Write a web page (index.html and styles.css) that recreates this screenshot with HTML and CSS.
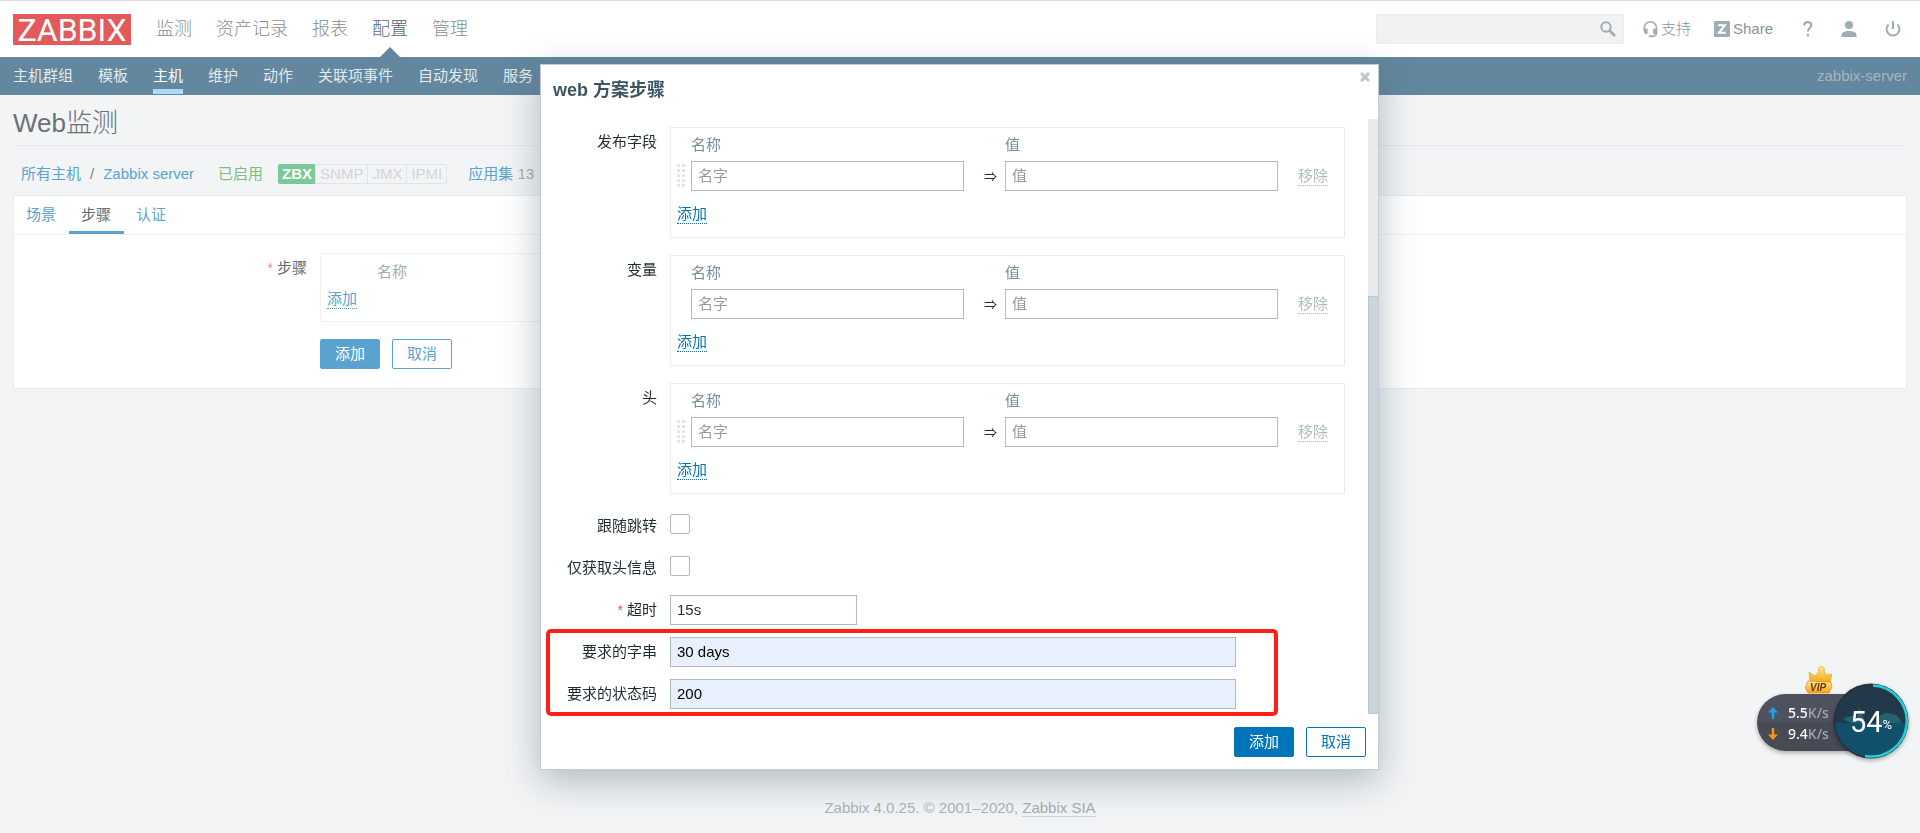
FILE: index.html
```html
<!DOCTYPE html>
<html lang="zh-CN">
<head>
<meta charset="utf-8">
<title>Web监测</title>
<link rel="stylesheet" href="styles.css">
</head>
<body>
<div class="page">
<header class="top">
  <a class="logo" href="#">ZABBIX</a>
  <nav class="main-nav">
    <a href="#">监测</a><a href="#">资产记录</a><a href="#">报表</a><a class="active" href="#">配置</a><a href="#">管理</a>
  </nav>
  <form class="search">
    <input type="text" aria-label="搜索">
    <button type="button" aria-label="搜索"><svg width="16" height="16" viewBox="0 0 16 16"><circle cx="6" cy="6" r="4.7" fill="none" stroke="#9fadb5" stroke-width="2"/><path d="M9.5 9.5L15 15" stroke="#9fadb5" stroke-width="2.6"/></svg></button>
  </form>
  <div class="tools">
    <a class="tool" href="#"><svg width="15" height="17" viewBox="0 0 15 17"><path d="M1.2 10V7a6.2 6.2 0 0 1 12.4 0v5q0 3.2-4.6 3.4" fill="none" stroke="#9fadb5" stroke-width="1.6"/><path d="M1 7.5h3.600v5.500H3Q1 13 1 11zM10.200 7.500h3.600V11q0 2-2 2h-1.600zM6 14.300h3v2H6z" fill="#9fadb5"/></svg>支持</a>
    <a class="tool share" href="#"><svg width="16" height="16" viewBox="0 0 16 16"><rect width="16" height="16" rx="1" fill="#9fadb5"/><path d="M4.200 4.200h6.600L5 11.800h6.800" fill="none" stroke="#fff" stroke-width="2"/></svg>Share</a>
    <a class="icon-link" href="#" aria-label="帮助"><svg width="10" height="16" viewBox="0 0 10 16"><path d="M1.200 4.500C1.200 2 2.700 1.100 4.700 1.100s3.600 1 3.600 3c0 2.700-3.400 3.100-3.400 6.500" fill="none" stroke="#9fadb5" stroke-width="2.200"/><rect x="3.700" y="13" width="2.500" height="2.500" rx="1" fill="#9fadb5"/></svg></a>
    <a class="icon-link" href="#" aria-label="用户"><svg width="16" height="16" viewBox="0 0 16 16"><circle cx="8" cy="4" r="4" fill="#9fadb5"/><path d="M0.500 16v-2C.5 11 4 10 8 10s7.500 1 7.500 4v2z" fill="#9fadb5"/></svg></a>
    <a class="icon-link" href="#" aria-label="退出"><svg width="16" height="16" viewBox="0 0 16 16"><path d="M3.600 3.500a6.400 6.400 0 1 0 8.800 0M8 0v8" fill="none" stroke="#9fadb5" stroke-width="2"/></svg></a>
  </div>
</header>
<nav class="sub-nav">
  <a href="#">主机群组</a><a href="#">模板</a><a class="active" href="#">主机</a><a href="#">维护</a><a href="#">动作</a><a href="#">关联项事件</a><a href="#">自动发现</a><a href="#">服务</a>
  <span class="server">zabbix-server</span>
</nav>
<main class="content">
  <h1>Web监测</h1>
  <div class="crumbs">
    <a href="#">所有主机</a><span class="slash">/</span><a href="#">Zabbix server</a>
    <span class="enabled">已启用</span>
    <span class="status"><span class="on">ZBX</span><span>SNMP</span><span>JMX</span><span>IPMI</span></span>
    <span class="apps"><a href="#">应用集</a> 13</span>
  </div>
  <section class="panel">
    <div class="tabs"><a href="#">场景</a><a class="active" href="#">步骤</a><a href="#">认证</a></div>
    <div class="panel-body">
      <div class="panel-label"><span class="star">*</span> 步骤</div>
      <div>
        <div class="steps"><div class="steps-head">名称</div><button type="button" class="link">添加</button></div>
        <div class="panel-actions"><button type="button" class="btn primary">添加</button><button type="button" class="btn">取消</button></div>
      </div>
    </div>
  </section>
</main>
<footer class="footer">Zabbix 4.0.25. © 2001–2020, <a href="#">Zabbix SIA</a></footer>
</div>

<div class="overlay">
<div class="dialog" role="dialog" aria-labelledby="dlg-title">
  <div class="dialog-head">
    <h2 id="dlg-title">web 方案步骤</h2>
    <button type="button" class="close" aria-label="关闭"><svg width="10" height="10" viewBox="0 0 10 10"><path d="M1 1l8 8M9 1L1 9" stroke="#b9c5cc" stroke-width="3"/></svg></button>
  </div>
  <div class="dialog-body">
    <form class="form">
      <div class="row pairs-row">
        <div class="label">发布字段</div>
        <div class="pairs">
          <label class="c-name" for="p1n">名称</label><label class="c-value" for="p1v">值</label>
          <span class="drag"></span><input id="p1n" type="text" placeholder="名字"><span class="arrow">⇒</span><input id="p1v" type="text" placeholder="值"><button type="button" class="link off">移除</button>
          <button type="button" class="link add">添加</button>
        </div>
      </div>
      <div class="row pairs-row">
        <div class="label">变量</div>
        <div class="pairs">
          <label class="c-name" for="p2n">名称</label><label class="c-value" for="p2v">值</label>
          <span></span><input id="p2n" type="text" placeholder="名字"><span class="arrow">⇒</span><input id="p2v" type="text" placeholder="值"><button type="button" class="link off">移除</button>
          <button type="button" class="link add">添加</button>
        </div>
      </div>
      <div class="row pairs-row">
        <div class="label">头</div>
        <div class="pairs">
          <label class="c-name" for="p3n">名称</label><label class="c-value" for="p3v">值</label>
          <span class="drag"></span><input id="p3n" type="text" placeholder="名字"><span class="arrow">⇒</span><input id="p3v" type="text" placeholder="值"><button type="button" class="link off">移除</button>
          <button type="button" class="link add">添加</button>
        </div>
      </div>
      <div class="row"><label class="label" for="follow">跟随跳转</label><input id="follow" type="checkbox"></div>
      <div class="row"><label class="label" for="heads">仅获取头信息</label><input id="heads" type="checkbox"></div>
      <div class="row"><label class="label" for="timeout"><span class="star">*</span> 超时</label><input id="timeout" class="short" type="text" value="15s"></div>
      <div class="marked">
        <div class="row"><label class="label" for="reqstr">要求的字串</label><input id="reqstr" class="long" type="text" value="30 days"></div>
        <div class="row"><label class="label" for="codes">要求的状态码</label><input id="codes" class="long" type="text" value="200"></div>
      </div>
    </form>
    <div class="track"><div class="thumb"></div></div>
  </div>
  <div class="dialog-foot"><button type="button" class="btn primary">添加</button><button type="button" class="btn">取消</button></div>
</div>
</div>

<aside class="meter">
  <div class="speeds">
    <div class="speed"><svg width="10" height="12" viewBox="0 0 10 12"><path d="M5 0l5 5.500H6.200V12H3.800V5.500H0z" fill="#1ba4f2"/></svg><span>5.5<i>K/s</i></span></div>
    <div class="speed"><svg width="10" height="12" viewBox="0 0 10 12"><path d="M5 12l5-5.500H6.200V0H3.800v6.500H0z" fill="#ff9313"/></svg><span>9.4<i>K/s</i></span></div>
  </div>
  <div class="dial">
    <svg width="76" height="76" viewBox="0 0 76 76">
      <defs><clipPath id="disc"><circle cx="38" cy="38" r="36"/></clipPath></defs>
      <circle cx="38" cy="38" r="37.500" fill="#2b2f3b"/>
      <g clip-path="url(#disc)"><rect width="76" height="76" fill="#22384b"/><path d="M10 36q7-5 14-2l2-10 4 9 2 7H18zM44 40q1-9 9-10 14 0 15 10z" fill="#25616f"/><rect y="40" width="76" height="36" fill="#124f6b"/></g>
      <path d="M40 2.600A35.500 35.500 0 1 1 32 73" fill="none" stroke="#25cfd8" stroke-width="2.500"/>
    </svg>
    <div class="percent"><span>54</span><small>%</small></div>
  </div>
  <svg class="crown" width="28" height="28" viewBox="0 0 28 28">
    <defs><linearGradient id="gold" x1="0" y1="0" x2="0" y2="1"><stop offset="0" stop-color="#ffe98a"/><stop offset="1" stop-color="#f2a516"/></linearGradient></defs>
    <path d="M5 16L4 6l6 4 4-5a3 3 0 1 1 5 0l2 4 6-1-2 9z" fill="url(#gold)" stroke="#e2a02c" stroke-width=".6"/>
    <path d="M3 15l23 1 1 5-3 6H3l-3-5z" fill="url(#gold)" stroke="#e28a26" stroke-width=".7"/>
    <text x="5" y="25" class="vip">VIP</text>
  </svg>
</aside>
</body>
</html>
```
FILE: styles.css
```css
*, *::before, *::after { box-sizing: border-box; }
body {
  margin: 0;
  background: #f2f4f5;
  color: #1f2c33;
  font: 15px/20px "Liberation Sans", "Noto Sans CJK SC", sans-serif;
}
h1, h2 { margin: 0; }
a { text-decoration: none; }
button, input { font: inherit; margin: 0; }
svg { display: block; flex: none; }
.page { min-height: 100vh; display: flex; flex-direction: column; }

.top {
  display: flex;
  align-items: center;
  height: 57px;
  padding: 0 19px 0 13px;
  background: #fff;
  border-top: 1px solid #d9dade;
}
.logo {
  width: 118px;
  height: 31px;
  background: #e45959;
  color: #fff;
  font: 32px/32px Roboto, sans-serif;
  text-align: center;
}
.main-nav { display: flex; align-self: stretch; margin-left: 13px; font-size: 18px; font-weight: 300; }
.main-nav a { position: relative; padding: 0 12px; line-height: 56px; color: #8a8f92; }
.main-nav .active { color: #5d666c; }
.main-nav .active::after {
  content: "";
  position: absolute;
  bottom: 0;
  left: calc(50% - 10px);
  border: 10px solid transparent;
  border-top: 0;
  border-bottom-color: #62879e;
}
.search {
  display: flex;
  align-items: center;
  width: 248px;
  height: 30px;
  margin-left: auto;
  padding-right: 7px;
  background: #f2f2f2;
  border: 1px solid #ebeded;
}
.search input { flex: 1; min-width: 0; border: 0; background: none; }
.search button { padding: 0; border: 0; background: none; }
.tools { display: flex; align-items: center; margin-left: 19px; }
.tool { display: flex; align-items: center; gap: 3px; color: #8a9297; font-weight: 300; }
.share { margin-left: 23px; }
.icon-link { margin-left: 28px; }
.share + .icon-link { margin-left: 30px; }

.sub-nav {
  display: flex;
  gap: 25px;
  height: 38px;
  padding: 0 13px;
  background: #62879e;
}
.sub-nav a { padding-top: 9px; color: #e2eaee; height: 37px; }
.sub-nav .active { color: #fff; border-bottom: 5px solid #a9daf8; }
.server { margin-left: auto; padding-top: 9px; color: #a5b5c0; }

.content { padding: 0 13px; }
h1 {
  height: 51px;
  border-bottom: 1px solid #e6e9eb;
  color: #6a7175;
  font-size: 26px;
  line-height: 56px;
  font-weight: 300;
}
.crumbs { display: flex; align-items: center; height: 49px; padding: 6px 8px 0; color: #a0adb4; }
.crumbs a, .tabs a { color: #5aa3d1; }
.slash { padding: 0 9px; color: #7a8287; }
.enabled { margin-left: 24px; color: #7fbd7f; }
.status { display: flex; margin: 0 21px 0 15px; border: 1px solid #dfe4e7; border-radius: 2px; line-height: 18px; color: #d0d7da; }
.status span { padding: 0 4px; border-left: 1px solid #dfe4e7; }
.status .on { margin: -1px 0 -1px -1px; padding: 1px 3px 1px 4px; border: 0; background: #7bc998; color: #fff; font-weight: bold; border-radius: 2px 0 0 2px; }

.panel { background: #fff; border: 1px solid #e6ebed; }
.tabs { display: flex; height: 39px; border-bottom: 1px solid #f0f2f4; }
.tabs a { padding: 9px 13px 0 12px; height: 38px; }
.tabs .active { color: #636b70; border-bottom: 3px solid #5aa3d1; }
.panel-body { display: grid; grid-template-columns: 293px 1fr; column-gap: 13px; padding: 18px 13px 19px 0; color: #636b70; }
.panel-label { text-align: right; line-height: 30px; }
.star { color: #e45959; font-size: 14px; }
.panel-label .star { color: #ec8b8b; }
.steps { max-width: 960px; height: 69px; padding: 8px 6px; border: 1px solid #f0f2f3; }
.steps-head { padding-left: 50px; color: #9fadb5; }
.steps .link { margin-top: 8px; }
.link {
  display: block;
  justify-self: start;
  padding: 0;
  border: 0;
  border-bottom: 1px dotted #0275b8;
  background: none;
  color: #0275b8;
  line-height: 18px;
}
.steps .link { border-color: #5aa3d1; color: #5aa3d1; }
.panel-actions { display: flex; gap: 12px; margin-top: 17px; }
.btn {
  width: 60px;
  height: 30px;
  padding: 0;
  border: 1px solid #0275b8;
  border-radius: 2px;
  background: #fff;
  color: #0275b8;
  line-height: 28px;
}
.btn.primary { background: #0275b8; color: #fff; }
.panel-actions .btn { border-color: #5aa3d1; color: #5aa3d1; }
.panel-actions .primary { background: #5aa3d1; color: #fff; }
.footer { margin-top: auto; padding-bottom: 15px; text-align: center; color: #a8b4bb; }
.footer a { color: #a0adb5; border-bottom: 1px solid #ccd5d9; }

.overlay {
  position: fixed;
  inset: 0;
  display: flex;
  justify-content: center;
  align-items: flex-start;
  padding: 64px 1px 0 0;
}
.dialog {
  width: 839px;
  background: #fff;
  border: 1px solid #c3ced4;
  box-shadow: 0 10px 35px rgba(70, 95, 105, .4);
}
.dialog-head { display: flex; justify-content: space-between; height: 54px; padding: 7px 8px 0 12px; }
h2 { font-size: 18px; line-height: 36px; color: #3c5563; font-weight: bold; }
.close { height: 10px; padding: 0; border: 0; background: none; }
.dialog-body { display: flex; height: 595px; }
.form { flex: 1; padding: 8px 0 0 5px; }
.row { display: grid; grid-template-columns: 111px auto; column-gap: 13px; justify-content: start; min-height: 30px; margin-bottom: 12px; }
.pairs-row { margin-bottom: 17px; }
.label { text-align: right; line-height: 30px; }
.pairs {
  display: grid;
  grid-template-columns: 14px 273px 41px 273px 1fr;
  grid-template-rows: 27px 30px 1fr;
  width: 675px;
  height: 111px;
  padding: 6px;
  border: 1px solid #ebeded;
}
.c-name { grid-column: 2 / 4; color: #768d99; line-height: 22px; }
.c-value { grid-column: 4 / 6; color: #768d99; line-height: 22px; }
.drag {
  width: 10px;
  height: 25px;
  background:
    linear-gradient(transparent 3px, #fff 3px) 0 0 / 5px 5px,
    linear-gradient(90deg, #e2e6e8 3px, transparent 3px) 0 0 / 5px 5px;
  margin-top: 3px;
}
.arrow { padding-left: 20px; font-size: 13px; line-height: 32px; }
input[type="text"]:not(.search input) {
  height: 30px;
  padding: 0 6px 1px;
  border: 1px solid #acbbc2;
  border-radius: 0;
  background: #fff;
  color: #1f2c33;
}
input::placeholder { color: #999; opacity: 1; }
.off { margin: 6px 0 0 20px; height: 19px; color: #acbbc2; border-color: #acbbc2; }
.pairs .add { grid-column: 1 / 4; align-self: start; margin-top: 14px; }
input[type="checkbox"] { appearance: none; width: 20px; height: 20px; margin-top: 3px; border: 1px solid #acbbc2; border-radius: 2px; background: #fff; }
input.short { width: 187px; }
input[type="text"].long:not(.search input) { width: 566px; background: #e8f0fe; color: #000; }
.marked { position: relative; }
.marked::after {
  content: "";
  position: absolute;
  left: 0;
  top: -8px;
  width: 732px;
  height: 87px;
  border: 4px solid #ff2015;
  border-radius: 5px;
  pointer-events: none;
}
.track { width: 10px; background: #eaeaea; padding-top: 177px; }
.thumb { height: 100%; background: #ccd5db; border: 1px solid #bac5cc; border-right: 0; }
.dialog-foot { display: flex; justify-content: flex-end; gap: 12px; padding: 13px 12px 12px; }

.meter { position: fixed; right: 11px; top: 683px; width: 152px; height: 76px; color: #fff; }
.speeds {
  position: absolute;
  left: 0;
  top: 11px;
  width: 110px;
  height: 57px;
  border-radius: 29px 0 0 29px;
  background: linear-gradient(#4e525e 50%, #474b56 50%);
  box-shadow: 0 2px 4px rgba(0, 0, 0, .3);
  padding: 8px 0 0 11px;
}
.speed { display: flex; align-items: center; gap: 10px; height: 21px; font: 500 14px/20px "Noto Sans", sans-serif; }
.speed i { font-style: normal; color: #a4a8b0; }
.dial { position: absolute; right: 0; top: 0; filter: drop-shadow(0 2px 2px rgba(0, 0, 0, .3)); }
.percent { position: absolute; left: 17px; top: 22px; display: flex; align-items: center; font: 29px/34px Roboto, sans-serif; }
.percent small { padding-top: 6px; font-size: 13px; line-height: 20px; }
.crown { position: absolute; left: 48px; top: -17px; }
.vip { font: italic bold 10px "Liberation Sans", sans-serif; fill: #6a3813; }
```
